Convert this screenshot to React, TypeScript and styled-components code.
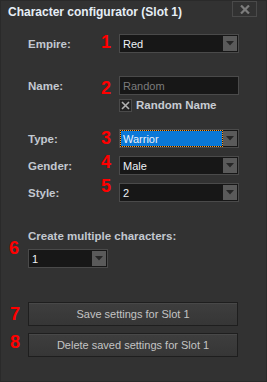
import React from "react";
import styled, { createGlobalStyle } from "styled-components";

const Global = createGlobalStyle`
  html, body { margin: 0; padding: 0; background: #323232; }
  * { box-sizing: border-box; }
`;

const Panel = styled.div`
  width: 267px;
  height: 382px;
  background: #323232;
  border: 1px solid #2a2a2a;
  font-family: "Liberation Sans", Arial, sans-serif;
  font-size: 11px;
  color: #c8ccd2;
  display: flex;
  flex-direction: column;
`;

const TitleBar = styled.div`
  height: 32px;
  display: flex;
  align-items: flex-start;
  justify-content: space-between;
  padding-left: 7px;
  padding-right: 9px;
`;

const Title = styled.div`
  font-weight: bold;
  font-size: 12px;
  color: #e6eef6;
  margin-top: 4px;
`;

const CloseButton = styled.div`
  width: 25px;
  height: 16px;
  border: 1px solid #4a4a4a;
  display: flex;
  align-items: center;
  justify-content: center;
  color: #7a7a7a;
`;

const Body = styled.div`
  display: flex;
  flex-direction: column;
  padding-left: 27px;
`;

const Row = styled.div<{ $mt: number }>`
  display: flex;
  align-items: center;
  margin-top: ${(p) => p.$mt}px;
  height: 19px;
`;

const Label = styled.div`
  width: 73px;
  font-weight: bold;
  font-size: 11.5px;
  color: #c2c8d0;
`;

const Num = styled.div<{ $dy?: number }>`
  width: 18px;
  color: #ff0000;
  font-weight: bold;
  font-size: 18px;
  line-height: 19px;
  transform: translateY(${(p) => p.$dy ?? 0}px);
`;

const SideNum = styled(Num)`
  position: absolute;
  left: -19px;
  width: auto;
`;

const Field = styled.div<{ $w?: number }>`
  width: ${(p) => p.$w ?? 120}px;
  height: 19px;
  background: #171717;
  border: 1px solid #4a4a4a;
  display: flex;
  align-items: stretch;
  padding: 1px;
`;

const FieldText = styled.div<{ $placeholder?: boolean; $selected?: boolean }>`
  flex: 1;
  display: flex;
  align-items: center;
  padding-left: 2px;
  color: ${(p) => (p.$placeholder ? "#7c7c7c" : "#eef2f6")};
  background: ${(p) => (p.$selected ? "#0a78d7" : "transparent")};
  outline: ${(p) => (p.$selected ? "1px dotted #ff9a1f" : "none")};
  margin-right: ${(p) => (p.$selected ? "1px" : "0")};
`;

const Arrow = styled.div`
  width: 14px;
  background: #5a5a5a;
  display: flex;
  align-items: center;
  justify-content: center;
`;

const CheckRow = styled.div`
  display: flex;
  align-items: center;
  margin-top: 3px;
  margin-left: 91px;
  height: 14px;
`;

const CheckBox = styled.div`
  width: 13px;
  height: 13px;
  border: 1px solid #4a4a4a;
  background: #222;
  display: flex;
  align-items: center;
  justify-content: center;
`;

const CheckLabel = styled.div`
  margin-left: 4px;
  font-weight: bold;
  font-size: 11.5px;
  color: #c8ccd2;
`;

const SectionTitle = styled.div`
  position: relative;
  margin-top: 28px;
  font-weight: bold;
  font-size: 11.5px;
  color: #c2c8d0;
  height: 13px;
`;

const Multi = styled.div`
  position: relative;
  margin-top: 6px;
  height: 19px;
`;

const Buttons = styled.div`
  display: flex;
  flex-direction: column;
  gap: 7px;
  margin-top: 34px;
`;

const Btn = styled.div`
  position: relative;
  width: 210px;
  height: 24px;
  border: 1px solid #1e1e1e;
  background: linear-gradient(#3e3e3e, #363636);
  box-shadow: inset 0 1px 0 #484848;
  display: flex;
  align-items: center;
  justify-content: center;
  color: #c4c4c4;
  font-size: 11px;
`;

const Tri = () => (
  <svg width="8" height="5" viewBox="0 0 8 5">
    <polygon points="0,0 8,0 4,4.5" fill="#262626" />
  </svg>
);

const Select = ({
  value,
  selected,
  w,
}: {
  value: string;
  selected?: boolean;
  w?: number;
}) => (
  <Field $w={w}>
    <FieldText $selected={selected}>{value}</FieldText>
    <Arrow>
      <Tri />
    </Arrow>
  </Field>
);

export default function App() {
  return (
    <>
      <Global />
      <Panel>
        <TitleBar>
          <Title>Character configurator (Slot 1)</Title>
          <CloseButton>
            <svg width="10" height="9" viewBox="0 0 10 9">
              <path d="M1 0.5 L9 8.5 M9 0.5 L1 8.5" stroke="#7c7c7c" strokeWidth="2.2" />
            </svg>
          </CloseButton>
        </TitleBar>
        <Body>
          <Row $mt={1}>
            <Label>Empire:</Label>
            <Num $dy={-1}>1</Num>
            <Select value="Red" />
          </Row>
          <Row $mt={23}>
            <Label>Name:</Label>
            <Num $dy={3}>2</Num>
            <Field>
              <FieldText $placeholder>Random</FieldText>
            </Field>
          </Row>
          <CheckRow>
            <CheckBox>
              <svg width="9" height="9" viewBox="0 0 9 9">
                <path d="M1 1 L8 8 M8 1 L1 8" stroke="#b0b0b0" strokeWidth="1.6" />
              </svg>
            </CheckBox>
            <CheckLabel>Random Name</CheckLabel>
          </CheckRow>
          <Row $mt={17}>
            <Label>Type:</Label>
            <Num>3</Num>
            <Select value="Warrior" selected />
          </Row>
          <Row $mt={8}>
            <Label>Gender:</Label>
            <Num $dy={-3}>4</Num>
            <Select value="Male" />
          </Row>
          <Row $mt={8}>
            <Label>Style:</Label>
            <Num $dy={-6}>5</Num>
            <Select value="2" />
          </Row>
          <SectionTitle>Create multiple characters:</SectionTitle>
          <Multi>
            <SideNum $dy={-10}>6</SideNum>
            <Select value="1" w={80} />
          </Multi>
          <Buttons>
            <Btn>
              <SideNum $dy={0}>7</SideNum>
              Save settings for Slot 1
            </Btn>
            <Btn>
              <SideNum $dy={-3}>8</SideNum>
              Delete saved settings for Slot 1
            </Btn>
          </Buttons>
        </Body>
      </Panel>
    </>
  );
}
